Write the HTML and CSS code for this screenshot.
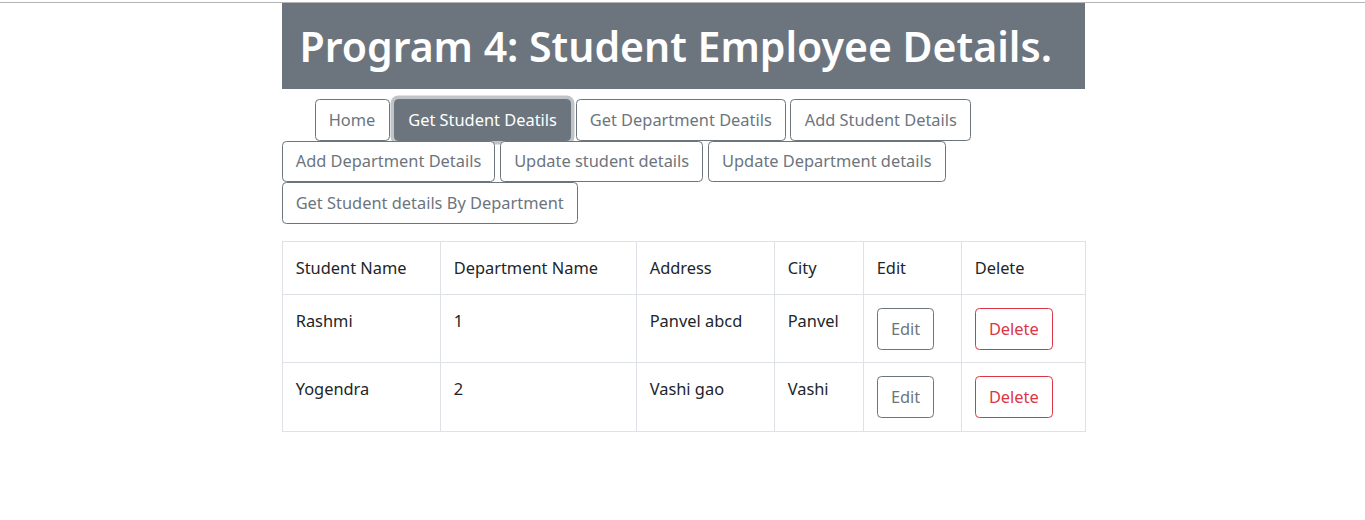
FILE: index.html
```html
<!DOCTYPE html>
<html lang="en">
<head>
<meta charset="utf-8">
<title>Program 4</title>
<link rel="stylesheet" href="styles.css">
</head>
<body>
<div class="topline"></div>
<div class="container">
  <h1 class="banner">Program 4: Student Employee Details.</h1>
  <nav class="nav">
    <div class="nav-row first">
      <button class="btn">Home</button>
      <button class="btn active">Get Student Deatils</button>
      <button class="btn">Get Department Deatils</button>
      <button class="btn">Add Student Details</button>
    </div>
    <div class="nav-row">
      <button class="btn">Add Department Details</button>
      <button class="btn">Update student details</button>
      <button class="btn">Update Department details</button>
    </div>
    <div class="nav-row">
      <button class="btn">Get Student details By Department</button>
    </div>
  </nav>
  <table class="table">
    <colgroup>
      <col class="c1"><col class="c2"><col class="c3"><col class="c4"><col class="c5"><col class="c6">
    </colgroup>
    <thead>
      <tr><th>Student Name</th><th>Department Name</th><th>Address</th><th>City</th><th>Edit</th><th>Delete</th></tr>
    </thead>
    <tbody>
      <tr><td>Rashmi</td><td>1</td><td>Panvel abcd</td><td>Panvel</td><td><button class="btn">Edit</button></td><td><button class="btn danger">Delete</button></td></tr>
      <tr><td>Yogendra</td><td>2</td><td>Vashi gao</td><td>Vashi</td><td><button class="btn">Edit</button></td><td><button class="btn danger">Delete</button></td></tr>
    </tbody>
  </table>
</div>
</body>
</html>
```
FILE: styles.css
```css
html, body {
  margin: 0;
  padding: 0;
  background: #fff;
}
body {
  font-family: "Noto Sans", "Open Sans", sans-serif;
  font-size: 16.4px;
  line-height: 26.4px;
  color: #212529;
}
.topline {
  margin-top: 2px;
  height: 1px;
  background: #b4b4b4;
}
.container {
  width: 803px;
  margin: 0 auto;
  padding-left: 1px;
}
.banner {
  margin: 0;
  background: #6c757d;
  color: #fff;
  font-size: 41px;
  font-weight: 600;
  line-height: 52px;
  padding: 17px 18px;
  white-space: nowrap;
}
.nav {
  margin-top: 10px;
  display: flex;
  flex-direction: column;
}
.nav-row {
  display: flex;
  gap: 4.5px;
}
.nav-row.first {
  padding-left: 33px;
}
.btn {
  font-family: inherit;
  font-size: 16.4px;
  line-height: 26.4px;
  padding: 6.6px 13.2px;
  border: 1.1px solid #6c757d;
  border-radius: 4.4px;
  background: #fff;
  color: #6c757d;
  cursor: pointer;
}
.btn.active {
  background: #6c757d;
  color: #fff;
  box-shadow: 0 0 0 3.5px rgba(130, 138, 145, 0.5);
}
.btn.danger {
  border-color: #dc3545;
  color: #dc3545;
}
.table {
  margin-top: 17.5px;
  width: 803px;
  border-collapse: collapse;
  table-layout: fixed;
}
.c1 { width: 158px; }
.c2 { width: 196px; }
.c3 { width: 138px; }
.c4 { width: 89px; }
.c5 { width: 98px; }
.c6 { width: 124px; }
.table th, .table td {
  border: 1px solid #dee2e6;
  padding: 13px 13.2px 12.6px;
  text-align: left;
  vertical-align: top;
  font-weight: 400;
}
```
